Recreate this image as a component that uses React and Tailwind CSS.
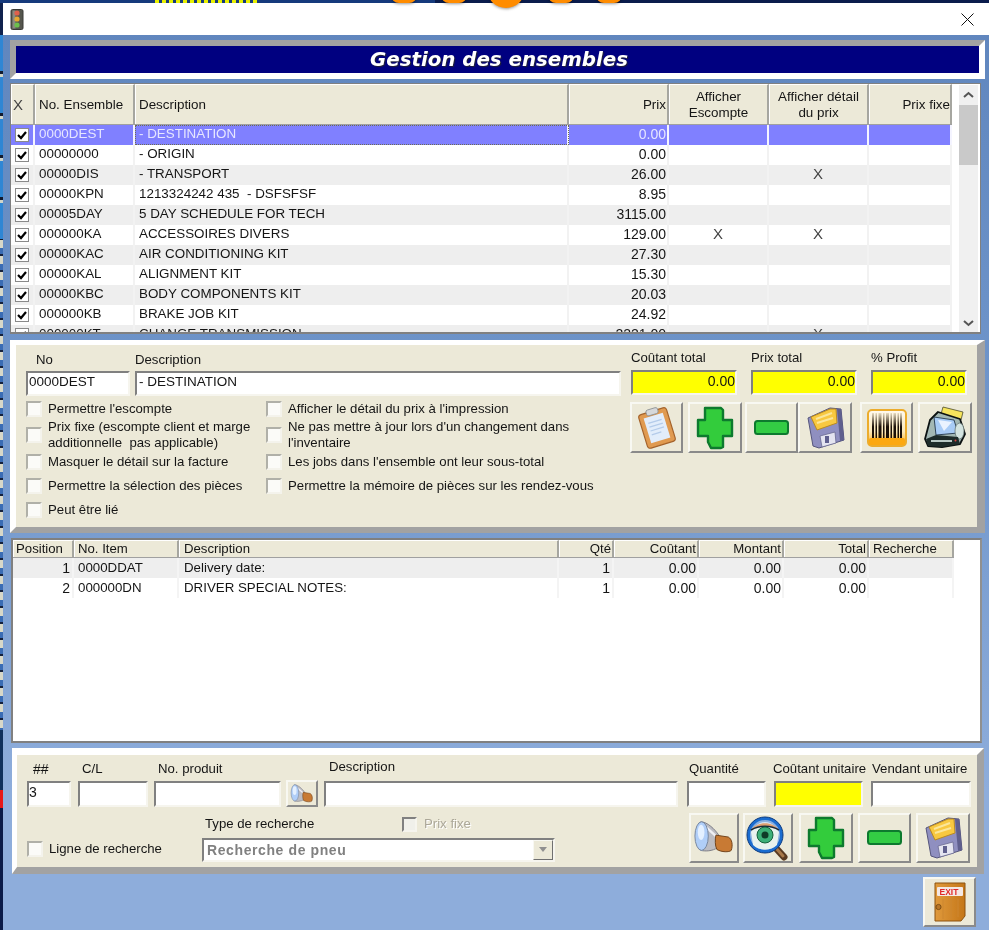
import React from "react";

const rows1 = [
  ["0000DEST", "- DESTINATION", "0.00", "", ""],
  ["00000000", "- ORIGIN", "0.00", "", ""],
  ["00000DIS", "- TRANSPORT", "26.00", "", "X"],
  ["00000KPN", "1213324242 435  - DSFSFSF", "8.95", "", ""],
  ["00005DAY", "5 DAY SCHEDULE FOR TECH", "3115.00", "", ""],
  ["000000KA", "ACCESSOIRES DIVERS", "129.00", "X", "X"],
  ["00000KAC", "AIR CONDITIONING KIT", "27.30", "", ""],
  ["00000KAL", "ALIGNMENT KIT", "15.30", "", ""],
  ["00000KBC", "BODY COMPONENTS KIT", "20.03", "", ""],
  ["000000KB", "BRAKE JOB KIT", "24.92", "", ""],
  ["000000KT", "CHANGE TRANSMISSION", "2221.00", "", "X"],
];

const rows2 = [
  ["1", "0000DDAT", "Delivery date:", "1", "0.00", "0.00", "0.00"],
  ["2", "000000DN", "DRIVER SPECIAL NOTES:", "1", "0.00", "0.00", "0.00"],
];

const inset = "border-2 border-t-[#808080] border-l-[#808080] border-r-[#f6f5ee] border-b-[#f6f5ee]";
const raised = "border-2 border-t-[#f8f8f2] border-l-[#f8f8f2] border-r-[#8a8a8a] border-b-[#8a8a8a] bg-[#ece9d8] flex items-center justify-center shrink-0";
const hcell = "h-full flex items-center border-r-2 border-r-[#a6a6a0] border-t border-t-white border-l border-l-white leading-[16px] overflow-hidden";

function Plus() {
  return (
    <svg width="38" height="44" viewBox="0 0 38 44">
      <path d="M9 2H25L27 4V14H36V30H27V41L25 42H15L12 36V30H2V14H9Z" fill="#33cc3c" stroke="#0d7a2e" strokeWidth="2.4" strokeLinejoin="round" />
    </svg>
  );
}

function Minus() {
  return (
    <svg width="38" height="18" viewBox="0 0 38 18">
      <rect x="2" y="2" width="33" height="13" rx="2.5" fill="#33cc44" stroke="#0d7a2e" strokeWidth="2" />
    </svg>
  );
}

function Floppy() {
  return (
    <svg width="42" height="44" viewBox="0 0 42 44">
      <path d="M4 12L26 2L37 3L40 34L15 42L9 40Z" fill="#8f8fc0" stroke="#55557c" strokeWidth="1" />
      <path d="M33 3L37 3L40 34L36 35Z" fill="#5f5f8e" />
      <path d="M7 11L26 3L32 3L33 17L13 24Z" fill="#f8c840" stroke="#b98a20" strokeWidth="1" />
      <path d="M12 13L28 7M13 17L29 12" stroke="#fbe69a" strokeWidth="2" />
      <path d="M16 30L31 26L32 37L18 41Z" fill="#e4e4f0" stroke="#6a6a92" strokeWidth="0.8" />
      <rect x="21" y="30" width="4" height="7" fill="#5f5f8e" />
    </svg>
  );
}

function Clipboard() {
  return (
    <svg width="42" height="44" viewBox="0 0 42 44">
      <g transform="rotate(-17 21 22)">
        <rect x="6.5" y="4.5" width="29" height="35" rx="3" fill="#e09a50" stroke="#a4622a" strokeWidth="1.2" />
        <rect x="11" y="9" width="20" height="26" fill="#e2edfb" />
        <path d="M14 15H28M14 19H28M14 23H28M14 27H24" stroke="#b4cbea" strokeWidth="1.3" />
        <rect x="15" y="2" width="12" height="6" rx="2" fill="#d6d8da" stroke="#8a8e92" strokeWidth="0.8" />
      </g>
    </svg>
  );
}

function Barcode() {
  return (
    <svg width="44" height="44" viewBox="0 0 44 44">
      <defs>
        <linearGradient id="bc" x1="0" y1="0" x2="0" y2="1">
          <stop offset="0" stopColor="#fffaf0" />
          <stop offset="0.6" stopColor="#fbe8b8" />
          <stop offset="1" stopColor="#fca810" />
        </linearGradient>
        <linearGradient id="bars" x1="0" y1="0" x2="0" y2="1">
          <stop offset="0" stopColor="#e8dcc0" />
          <stop offset="0.55" stopColor="#1a1008" />
          <stop offset="1" stopColor="#1a1008" />
        </linearGradient>
      </defs>
      <rect x="3" y="4" width="38" height="36" rx="4" fill="url(#bc)" stroke="#ecac2c" strokeWidth="2" />
      <g fill="url(#bars)">
        <rect x="7" y="7" width="2" height="25" />
        <rect x="10.5" y="7" width="1.5" height="25" />
        <rect x="13.5" y="7" width="3" height="25" />
        <rect x="18" y="7" width="1.5" height="25" />
        <rect x="21" y="7" width="3" height="25" />
        <rect x="25.5" y="7" width="1.5" height="25" />
        <rect x="28.5" y="7" width="2.5" height="25" />
        <rect x="32.5" y="7" width="1.5" height="25" />
        <rect x="35" y="7" width="2" height="25" />
      </g>
      <rect x="4" y="32" width="36" height="7" rx="2" fill="#fca810" />
    </svg>
  );
}

function Printer() {
  return (
    <svg width="46" height="44" viewBox="0 0 46 44">
      <path d="M19 8L21 1L41 6L39 14Z" fill="#f6e45c" stroke="#4a4a2a" strokeWidth="0.8" />
      <path d="M3 33L8 14L16 6L38 13L43 28L38 38L20 41L6 40Z" fill="#a3b8b4" stroke="#0c1212" strokeWidth="1.8" strokeLinejoin="round" />
      <path d="M12 11L32 14L36 27L14 29Z" fill="#a8ccf6" stroke="#24384c" strokeWidth="0.9" />
      <path d="M16 14L30 16L22 25Z" fill="#eaf3ff" />
      <ellipse cx="37.5" cy="25" rx="4.5" ry="8" fill="#d4e4e0" stroke="#5c6c68" strokeWidth="0.7" />
      <path d="M4 33L14 29L36 31L38 38L20 41L6 40Z" fill="#1e2c2a" />
      <path d="M9 35L30 35" stroke="#b8c8c4" strokeWidth="2" />
      <circle cx="33.5" cy="34.5" r="1" fill="#d84040" />
    </svg>
  );
}

function Torch({ size = 44 }) {
  return (
    <svg width={size} height={size} viewBox="0 0 44 44">
      <path d="M8 5C15 5 23 13 27 19L26 32C20 36 13 36 8 35Z" fill="#bcbcc2" stroke="#7c7c84" strokeWidth="1" />
      <path d="M12 9L24 20" stroke="#f0f0f4" strokeWidth="2.5" />
      <path d="M24 19L37 21C41 23 42 30 40 35C38 37 30 37 25 34C23 30 23 24 24 19Z" fill="#c87a34" stroke="#6e4018" strokeWidth="1" />
      <ellipse cx="9" cy="20" rx="7" ry="15" fill="#b0cef8" stroke="#74849c" strokeWidth="1" />
      <ellipse cx="8.5" cy="16" rx="3.5" ry="8" fill="#e4f0ff" />
    </svg>
  );
}

function EyeGlass() {
  return (
    <svg width="46" height="46" viewBox="0 0 46 46">
      <path d="M29 31L39 42" stroke="#5a3a20" strokeWidth="7" strokeLinecap="round" />
      <path d="M30 32L38 41" stroke="#a87848" strokeWidth="3" strokeLinecap="round" />
      <circle cx="20" cy="20" r="18" fill="#1a6cd0" stroke="#0e3c80" strokeWidth="1" />
      <circle cx="20" cy="20" r="14" fill="#d8e6f4" stroke="#8ab0e0" strokeWidth="2" />
      <path d="M6 17C11 8 27 7 34 17L32 30C26 36 14 36 8 30Z" fill="#e8f2ee" />
      <path d="M6 15C12 6 28 6 34 15C26 10 14 10 6 15Z" fill="#e0a070" />
      <path d="M6 15C14 10 26 10 34 15" stroke="#1a2a3a" strokeWidth="1.6" fill="none" />
      <circle cx="20" cy="20" r="8" fill="#3caf78" stroke="#14603c" strokeWidth="1" />
      <circle cx="20" cy="20" r="3.5" fill="#0f3a28" />
    </svg>
  );
}

function Exit() {
  return (
    <svg width="36" height="42" viewBox="0 0 36 42">
      <defs>
        <linearGradient id="dr" x1="0" y1="0" x2="1" y2="0">
          <stop offset="0" stopColor="#e09a3c" />
          <stop offset="1" stopColor="#c47618" />
        </linearGradient>
      </defs>
      <path d="M3 2H33V35L29 40H3Z" fill="url(#dr)" stroke="#8c5210" strokeWidth="1" />
      <rect x="5" y="6" width="26" height="9" rx="1" fill="#f4e8e4" />
      <text x="7.5" y="13.5" fontSize="8.5" fontWeight="700" fill="#e02828" fontFamily="Liberation Sans, sans-serif">EXIT</text>
      <path d="M11 18V38M19 18V38M26 18V36" stroke="#cc8630" strokeWidth="1" />
      <circle cx="6.5" cy="26" r="2.6" fill="#b87628" stroke="#6e4410" strokeWidth="0.8" />
    </svg>
  );
}

function Traffic() {
  return (
    <svg width="14" height="21" viewBox="0 0 14 21">
      <rect x="1" y="0.5" width="12" height="20" rx="1.5" fill="#55564e" stroke="#3a3a36" strokeWidth="1" />
      <rect x="2.5" y="1.5" width="3" height="18" fill="#8a8a80" />
      <circle cx="7" cy="4" r="2.6" fill="#e0604c" />
      <circle cx="7" cy="10" r="2.6" fill="#e8a830" />
      <circle cx="7" cy="16" r="2.6" fill="#6cc04c" />
    </svg>
  );
}

function RowCheck() {
  return (
    <span className="w-[14px] h-[14px] ml-[4px] bg-white border border-[#8a8a8a] flex items-center justify-center">
      <svg width="12" height="12" viewBox="0 0 12 12">
        <path d="M2 6L5 9L10 3" fill="none" stroke="#000" strokeWidth="2.2" />
      </svg>
    </span>
  );
}

function Box() {
  return <span className="w-[16px] h-[16px] shrink-0 bg-[#fbfbf8] border-2 border-t-[#b0b0a8] border-l-[#b0b0a8] border-r-[#f4f3ec] border-b-[#f4f3ec]" />;
}

function Check({ children }) {
  return (
    <div className="flex items-center gap-[6px] leading-[16px]">
      <Box />
      <span className="whitespace-pre-wrap">{children}</span>
    </div>
  );
}

export default function App() {
  return (
    <div className="relative w-[989px] h-[930px] overflow-hidden bg-[#0b1a48] text-[13.2px] text-[#151515] [font-family:Liberation_Sans,Arial,sans-serif]">
      {/* desktop behind the window */}
      <div className="h-[3px] flex">
        <div className="w-[155px] bg-[#163a7c]" />
        <div className="w-[105px] bg-[repeating-linear-gradient(90deg,#e8f000_0_4px,#163a7c_4px_7px)]" />
        <div className="w-[175px] bg-[#163a7c]" />
        <div className="flex-1 bg-[#0a1c4c]" />
      </div>
      <div className="absolute z-10 left-[391px] top-[-13px] w-[26px] h-[16px] rounded-full bg-[#ff8c00] shadow-[0_1px_3px_rgba(0,0,0,0.4)]" />
      <div className="absolute z-10 left-[441px] top-[-13px] w-[26px] h-[16px] rounded-full bg-[#ff8c00] shadow-[0_1px_3px_rgba(0,0,0,0.4)]" />
      <div className="absolute z-10 left-[487px] top-[-30px] w-[38px] h-[38px] rounded-full bg-[#ff8c00] shadow-[0_1px_3px_rgba(0,0,0,0.4)]" />
      <div className="absolute z-10 left-[548px] top-[-13px] w-[26px] h-[16px] rounded-full bg-[#ff8c00] shadow-[0_1px_3px_rgba(0,0,0,0.4)]" />
      <div className="absolute z-10 left-[596px] top-[-13px] w-[26px] h-[16px] rounded-full bg-[#ff8c00] shadow-[0_1px_3px_rgba(0,0,0,0.4)]" />

      <div className="flex h-[927px]">
        <div className="w-[3px] flex flex-col">
          <div className="h-[32px] bg-[#10224e]" />
          <div className="h-[205px] bg-[repeating-linear-gradient(180deg,#2f86d4_0_36px,#111a2e_36px_39px,#d0d4c8_39px_42px)]" />
          <div className="h-[490px] bg-[repeating-linear-gradient(180deg,#d8d8c8_0_8px,#3a6cb4_8px_14px,#14203c_14px_16px)]" />
          <div className="h-[60px] bg-[#10305c]" />
          <div className="h-[18px] bg-[#e81818]" />
          <div className="flex-1 bg-[#0b1a48]" />
        </div>

        <div className="w-[986px] flex flex-col blur-[0.3px] bg-[linear-gradient(180deg,#5f85bd_0%,#7096cb_45%,#8eaddb_85%)]">
          {/* title bar */}
          <div className="h-[32px] shrink-0 bg-white flex items-center justify-between pl-[7px] pr-[15px]">
            <Traffic />
            <svg width="13" height="13" viewBox="0 0 13 13">
              <path d="M0.5 0.5L12.5 12.5M12.5 0.5L0.5 12.5" stroke="#111" strokeWidth="1" />
            </svg>
          </div>

          {/* heading */}
          <div className="mt-[5px] ml-[7px] w-[975px] h-[39px] shrink-0 border-[6px] border-t-[#a2a2a2] border-l-[#a2a2a2] border-r-white border-b-white bg-[#000080] flex items-center justify-center pl-[3px]">
            <span className="text-white font-bold italic text-[19.8px] [font-family:DejaVu_Sans,sans-serif] [text-shadow:1px_1px_1px_#223]">Gestion des ensembles</span>
          </div>

          {/* top table */}
          <div className="mt-[4px] ml-[7px] w-[971px] h-[251px] shrink-0 bg-white border border-[#808080] border-b-2 flex overflow-hidden">
            <div className="w-[941px] shrink-0">
              <div className="h-[41px] grid grid-cols-[24px_100px_434px_100px_100px_100px_83px] bg-[#ece9d8] border-b border-b-[#a0a0a0] text-[13.4px]">
                <div className={hcell + " pl-[1px] text-[15px] text-[#444]"}>X</div>
                <div className={hcell + " pl-[3px]"}>No. Ensemble</div>
                <div className={hcell + " pl-[3px]"}>Description</div>
                <div className={hcell + " justify-end pr-[1px]"}>Prix</div>
                <div className={hcell + " justify-center text-center"}>Afficher<br />Escompte</div>
                <div className={hcell + " justify-center text-center"}>Afficher détail<br />du prix</div>
                <div className={hcell + " justify-end"}>Prix fixe</div>
              </div>
              {rows1.map((r, i) => {
                const sel = i === 0;
                const bg = sel ? "bg-[#8080ff] text-[#e6e6ff]" : i % 2 === 0 ? "bg-[#eeeeee]" : "bg-white";
                const sep = sel ? "border-r-2 border-r-[#f4f4ff]" : "border-r-2 border-r-[#f2f2f2]";
                return (
                  <div key={r[0]} className={"h-[20px] grid grid-cols-[24px_100px_434px_100px_100px_100px_83px] text-[13.4px] leading-[18px] whitespace-pre " + bg}>
                    <div className={"flex items-center " + sep}><RowCheck /></div>
                    <div className={"pl-[4px] " + sep}>{r[0]}</div>
                    <div className={"pl-[4px] " + sep + (sel ? " outline-1 outline-dotted outline-[#6e6e50] -outline-offset-1" : "")}>{r[1]}</div>
                    <div className={"text-right text-[14px] pr-[1px] " + sep}>{r[2]}</div>
                    <div className={"text-center text-[15px] text-[#444] " + sep}>{r[3]}</div>
                    <div className={"text-center text-[15px] text-[#444] " + sep}>{r[4]}</div>
                    <div className={sep} />
                  </div>
                );
              })}
            </div>
            <div className="ml-[7px] mt-[1px] w-[19px] h-[248px] shrink-0 bg-[#f0f0f0] flex flex-col">
              <div className="h-[20px] flex items-center justify-center">
                <svg width="11" height="8" viewBox="0 0 11 8"><path d="M1 6L5.5 2L10 6" fill="none" stroke="#555" strokeWidth="2" /></svg>
              </div>
              <div className="h-[60px] bg-[#c9c9c9]" />
              <div className="flex-1" />
              <div className="h-[20px] flex items-center justify-center">
                <svg width="11" height="8" viewBox="0 0 11 8"><path d="M1 2L5.5 6L10 2" fill="none" stroke="#555" strokeWidth="2" /></svg>
              </div>
            </div>
          </div>

          {/* details panel */}
          <div className="mt-[6px] ml-[7px] w-[975px] h-[193px] shrink-0 border-t-[5px] border-l-[6px] border-b-[6px] border-r-[8px] border-t-white border-l-white border-b-[#a2a2a2] border-r-[#a2a2a2] bg-[#ece9d8] flex">
            <div className="w-[615px] shrink-0">
              <div className="h-[52px] pt-[7px] pl-[10px] flex">
                <div className="w-[104px]">
                  <div className="h-[19px] pl-[10px] leading-[16px]">No</div>
                  <div className={"h-[25px] bg-white text-[13.5px] leading-[18px] pl-[1px] " + inset}>0000DEST</div>
                </div>
                <div className="w-[486px] ml-[5px]">
                  <div className="h-[19px] leading-[16px]">Description</div>
                  <div className={"h-[25px] bg-white text-[13.5px] leading-[18px] pl-[2px] " + inset}>- DESTINATION</div>
                </div>
              </div>
              <div className="ml-[10px] grid grid-cols-[240px_1fr] grid-rows-[23px_30px_24px_24px_23px] items-center">
                <Check>Permettre l'escompte</Check>
                <Check>Afficher le détail du prix à l'impression</Check>
                <Check>{"Prix fixe (escompte client et marge\nadditionnelle  pas applicable)"}</Check>
                <Check>{"Ne pas mettre à jour lors d'un changement dans\nl'inventaire"}</Check>
                <Check>Masquer le détail sur la facture</Check>
                <Check>Les jobs dans l'ensemble ont leur sous-total</Check>
                <Check>Permettre la sélection des pièces</Check>
                <Check>Permettre la mémoire de pièces sur les rendez-vous</Check>
                <Check>Peut être lié</Check>
              </div>
            </div>
            <div className="flex-1">
              <div className="pt-[5px] flex gap-[14px]">
                <div className="w-[106px]">
                  <div className="h-[20px] leading-[16px]">Coûtant total</div>
                  <div className={"h-[25px] bg-[#ffff00] text-right text-[14px] leading-[18px] " + inset}>0.00</div>
                </div>
                <div className="w-[106px]">
                  <div className="h-[20px] leading-[16px]">Prix total</div>
                  <div className={"h-[25px] bg-[#ffff00] text-right text-[14px] leading-[18px] " + inset}>0.00</div>
                </div>
                <div className="w-[96px]">
                  <div className="h-[20px] leading-[16px]">% Profit</div>
                  <div className={"h-[25px] bg-[#ffff00] text-right text-[14px] leading-[18px] " + inset}>0.00</div>
                </div>
              </div>
              <div className="mt-[7px] -ml-[1px] flex">
                <div className={"w-[53px] h-[51px] " + raised}><Clipboard /></div>
                <div className={"ml-[5px] w-[54px] h-[51px] " + raised}><Plus /></div>
                <div className={"ml-[3px] w-[53px] h-[51px] " + raised}><Minus /></div>
                <div className={"w-[54px] h-[51px] " + raised}><Floppy /></div>
                <div className={"ml-[8px] w-[53px] h-[51px] " + raised}><Barcode /></div>
                <div className={"ml-[5px] w-[54px] h-[51px] " + raised}><Printer /></div>
              </div>
            </div>
          </div>

          {/* items table */}
          <div className="mt-[5px] ml-[8px] w-[971px] h-[205px] shrink-0 bg-white border-2 border-t-[#808080] border-l-[#808080] border-b-[#808080] border-r-[#909090]">
            <div className="h-[18px] w-[941px] grid grid-cols-[61px_105px_380px_55px_85px_85px_85px_85px] bg-[#ece9d8] border-b border-b-[#a0a0a0]">
              <div className={hcell + " pl-[2px]"}>Position</div>
              <div className={hcell + " pl-[3px]"}>No. Item</div>
              <div className={hcell + " pl-[4px]"}>Description</div>
              <div className={hcell + " justify-end pr-[1px]"}>Qté</div>
              <div className={hcell + " justify-end pr-[1px]"}>Coûtant</div>
              <div className={hcell + " justify-end pr-[1px]"}>Montant</div>
              <div className={hcell + " justify-end pr-[1px]"}>Total</div>
              <div className={hcell + " pl-[3px]"}>Recherche</div>
            </div>
            {rows2.map((r, i) => (
              <div key={r[1]} className={"h-[20px] w-[941px] grid grid-cols-[61px_105px_380px_55px_85px_85px_85px_85px] text-[13.3px] leading-[20px] " + (i === 0 ? "bg-[#eeeeee]" : "bg-white")}>
                <div className="text-right text-[14px] pr-[2px] border-r-2 border-r-[#f4f4f4]">{r[0]}</div>
                <div className="pl-[4px] border-r-2 border-r-[#f4f4f4]">{r[1]}</div>
                <div className="pl-[5px] border-r-2 border-r-[#f4f4f4]">{r[2]}</div>
                <div className="text-right text-[14px] pr-[2px] border-r-2 border-r-[#f4f4f4]">{r[3]}</div>
                <div className="text-right text-[14px] pr-[1px] border-r-2 border-r-[#f4f4f4]">{r[4]}</div>
                <div className="text-right text-[14px] pr-[1px] border-r-2 border-r-[#f4f4f4]">{r[5]}</div>
                <div className="text-right text-[14px] pr-[1px] border-r-2 border-r-[#f4f4f4]">{r[6]}</div>
                <div className="border-r-2 border-r-[#f4f4f4]" />
              </div>
            ))}
          </div>

          {/* line editor panel */}
          <div className="mt-[5px] ml-[9px] w-[972px] h-[126px] shrink-0 border-t-[7px] border-l-[5px] border-b-[7px] border-r-[7px] border-t-white border-l-white border-b-[#a2a2a2] border-r-[#a2a2a2] bg-[#ece9d8]">
            <div className="h-[52px] flex items-end leading-[16px]">
              <div className="ml-[10px] w-[44px]">
                <div className="pl-[6px] pb-[4px] text-[14px]">##</div>
                <div className={"h-[26px] bg-white text-[14px] leading-[18px] " + inset}>3</div>
              </div>
              <div className="ml-[7px] w-[70px]">
                <div className="pl-[4px] pb-[4px]">C/L</div>
                <div className={"h-[26px] bg-white " + inset} />
              </div>
              <div className="ml-[6px] w-[127px]">
                <div className="pl-[4px] pb-[4px]">No. produit</div>
                <div className={"h-[26px] bg-white " + inset} />
              </div>
              <div className={"ml-[5px] w-[32px] h-[27px] " + raised}><Torch size={24} /></div>
              <div className="ml-[6px] w-[354px]">
                <div className="pl-[5px] pb-[6px]">Description</div>
                <div className={"h-[26px] bg-white " + inset} />
              </div>
              <div className="ml-[9px] w-[79px]">
                <div className="pl-[2px] pb-[4px]">Quantité</div>
                <div className={"h-[26px] bg-white " + inset} />
              </div>
              <div className="ml-[8px] w-[89px]">
                <div className="-ml-[1px] pb-[4px] whitespace-nowrap">Coûtant unitaire</div>
                <div className={"h-[26px] bg-[#ffff00] " + inset} />
              </div>
              <div className="ml-[8px] w-[100px]">
                <div className="pl-[1px] pb-[4px] whitespace-nowrap">Vendant unitaire</div>
                <div className={"h-[26px] bg-white " + inset} />
              </div>
            </div>
            <div className="h-[60px] flex">
              <div className="w-[185px] shrink-0 pl-[10px] pt-[34px]">
                <Check>Ligne de recherche</Check>
              </div>
              <div className="w-[353px] shrink-0 pt-[9px]">
                <div className="h-[16px] flex items-center leading-[16px]">
                  <span className="w-[200px] pl-[3px]">Type de recherche</span>
                  <span className="w-[15px] h-[15px] bg-[#f0f0ea] border-2 border-t-[#808080] border-l-[#808080] border-r-[#f6f5ee] border-b-[#f6f5ee]" />
                  <span className="ml-[7px] text-[#aca899] [text-shadow:1px_1px_0_#fff]">Prix fixe</span>
                </div>
                <div className={"mt-[6px] h-[24px] bg-white flex items-center justify-between " + inset}>
                  <span className="pl-[3px] font-bold text-[14px] text-[#808080] tracking-[0.6px]">Recherche de pneu</span>
                  <span className="w-[20px] h-[20px] bg-[#ece9d8] border border-t-[#f8f8f2] border-l-[#f8f8f2] border-r-[#707070] border-b-[#707070] flex items-center justify-center">
                    <svg width="10" height="6" viewBox="0 0 10 6"><path d="M1 0H9L5 5Z" fill="#909090" /></svg>
                  </span>
                </div>
              </div>
              <div className="ml-[134px] mt-[6px] flex">
                <div className={"w-[50px] h-[50px] " + raised}><Torch size={42} /></div>
                <div className={"ml-[4px] w-[50px] h-[50px] " + raised}><EyeGlass /></div>
                <div className={"ml-[6px] w-[54px] h-[50px] " + raised}><Plus /></div>
                <div className={"ml-[5px] w-[53px] h-[50px] " + raised}><Minus /></div>
                <div className={"ml-[5px] w-[54px] h-[50px] " + raised}><Floppy /></div>
              </div>
            </div>
          </div>

          {/* exit */}
          <div className="mt-[3px] flex justify-end pr-[13px]">
            <div className={"w-[53px] h-[50px] " + raised}><Exit /></div>
          </div>
        </div>
      </div>
    </div>
  );
}
